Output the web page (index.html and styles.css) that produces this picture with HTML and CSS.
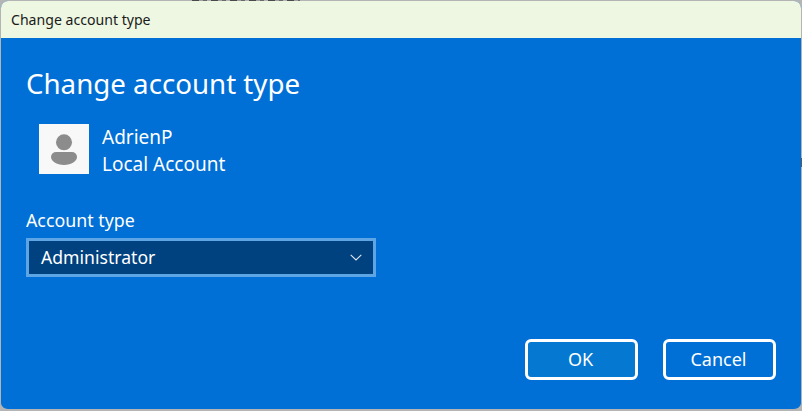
FILE: index.html
```html
<!DOCTYPE html>
<html lang="en">
<head>
<meta charset="utf-8">
<title>Change account type</title>
<link rel="stylesheet" href="styles.css">
</head>
<body>
<div class="dialog">
  <header class="titlebar">Change account type</header>
  <main class="content">
    <h1 class="heading">Change account type</h1>
    <div class="user">
      <div class="avatar">
        <svg width="50" height="50" viewBox="0 0 50 50" aria-hidden="true">
          <circle cx="25" cy="18.300" r="8" fill="#8c8c8c"/>
          <path d="M17 28h16a5 5 0 0 1 5 5c0 4-5.500 8-13 8s-13-4-13-8a5 5 0 0 1 5-5z" fill="#8c8c8c"/>
        </svg>
      </div>
      <div class="user-text">
        <div>AdrienP</div>
        <div>Local Account</div>
      </div>
    </div>
    <div class="field-label">Account type</div>
    <div class="select">
      <span>Administrator</span>
      <svg width="12" height="7" viewBox="0 0 12 7" aria-hidden="true"><path d="M.7.8 6 6l5.300-5.200" fill="none" stroke="#dfe6ee" stroke-width="1.100"/></svg>
    </div>
    <div class="actions">
      <button class="btn btn-primary">OK</button>
      <button class="btn">Cancel</button>
    </div>
  </main>
</div>
<div class="scrap scrap-top"></div>
<div class="scrap scrap-right"></div>
</body>
</html>
```

FILE: styles.css
```css
* { box-sizing: border-box; }
html, body { margin: 0; height: 100%; background: #b5b5b5; overflow: hidden; }
body { font-family: "Noto Sans", "Open Sans", sans-serif; }
.dialog {
  width: 802px; height: 411px;
  display: flex; flex-direction: column;
  border: 1px solid #b4b4b4; border-width: 1px 1px 2px 1px;
  border-radius: 8px; overflow: hidden;
  background: #006fd6;
}
.titlebar {
  height: 37px; flex: none;
  background: #edf7e2; color: #1a1a1a;
  font-size: 14.100px; line-height: 37px; padding-left: 10px;
}
.content {
  flex: 1; display: flex; flex-direction: column;
  padding: 25px 25px 29px 25px; color: #fff;
}
.heading { margin: 0; font-size: 27.700px; font-weight: 400; line-height: 40px; }
.user { display: flex; align-items: flex-start; gap: 13px; margin: 21px 0 0 13px; }
.avatar { width: 50px; height: 50px; background: #f8f8f8; }
.avatar svg { display: block; }
.user-text { font-size: 19px; line-height: 27px; }
.field-label { font-size: 17.800px; line-height: 24px; margin-top: 30px; }
.select {
  width: 350px; height: 39px; margin-top: 6px;
  display: flex; align-items: center; justify-content: space-between;
  padding: 0 11px 2px 12px;
  background: #00427f; border: 3px solid #5ea5e6;
  font-size: 17.600px;
}
.select svg { margin-top: 2px; }
.actions { margin-top: auto; display: flex; justify-content: flex-end; gap: 25px; }
.btn {
  width: 113px; height: 41px;
  background: transparent; color: #fff;
  border: 3px solid #fff; border-radius: 6px;
  font: inherit; font-size: 18px; padding: 0 2px 2px 0;
}
.btn-primary { background: #0578d2; }
.scrap { position: absolute; background: #5a5a5a; }
.scrap-top {
  top: 0; left: 192px; width: 108px; height: 1px;
  background: repeating-linear-gradient(90deg, #4a4a4a 0 7px, #a0a0a0 7px 11px, #6a6a6a 11px 15px, #b4b4b4 15px 19px);
}
.scrap-right { top: 158px; right: 0; width: 1px; height: 9px; }
```
